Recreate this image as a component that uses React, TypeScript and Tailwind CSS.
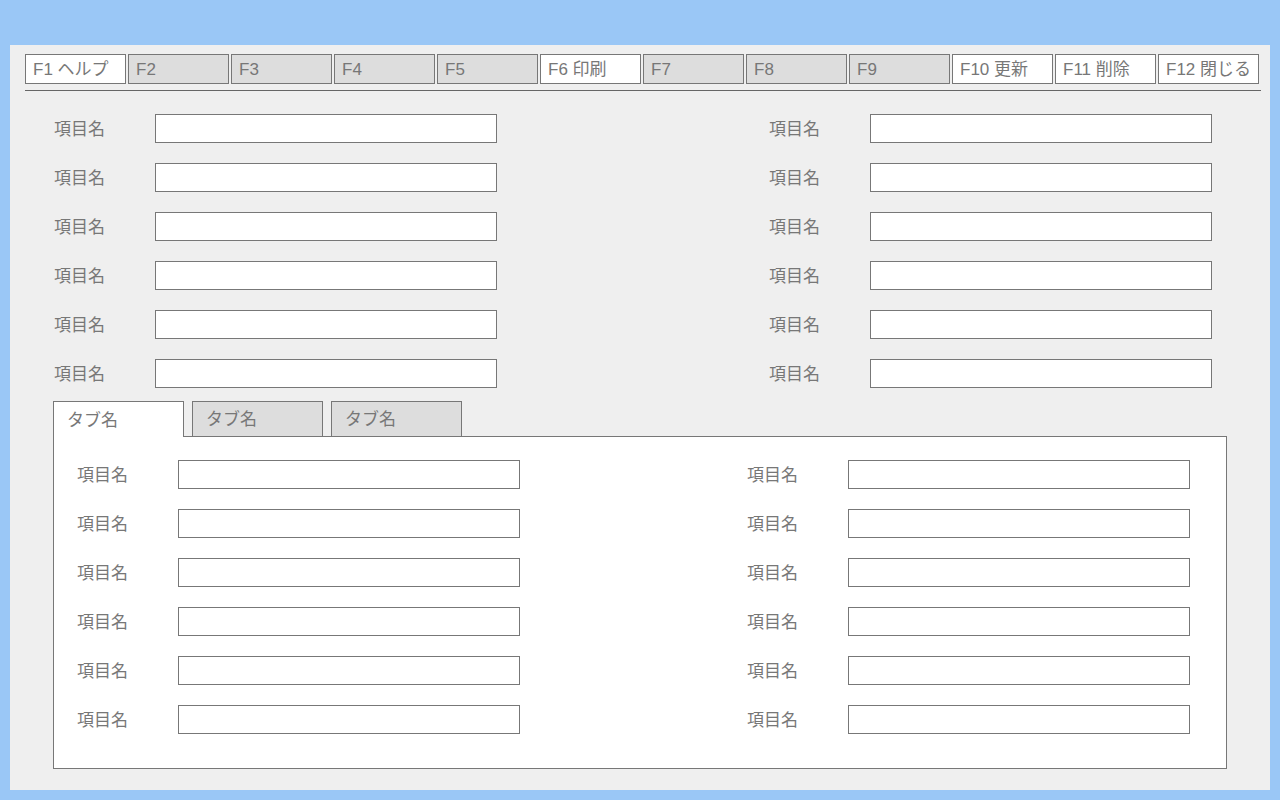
const fkeys = [
  { label: "F1 ヘルプ", on: true },
  { label: "F2", on: false },
  { label: "F3", on: false },
  { label: "F4", on: false },
  { label: "F5", on: false },
  { label: "F6 印刷", on: true },
  { label: "F7", on: false },
  { label: "F8", on: false },
  { label: "F9", on: false },
  { label: "F10 更新", on: true },
  { label: "F11 削除", on: true },
  { label: "F12 閉じる", on: true },
];

const rows = [0, 1, 2, 3, 4, 5];

const Field = () => (
  <div className="flex items-center">
    <span className="w-[101px] pt-px text-[17px] leading-none text-[#777]">項目名</span>
    <div className="h-[29px] w-[342px] border border-[#777] bg-white" />
  </div>
);

const FieldGrid = () => (
  <div className="flex flex-col gap-[20px]">
    {rows.map((r) => (
      <div key={r} className="flex justify-between">
        <Field />
        <Field />
      </div>
    ))}
  </div>
);

export default function App() {
  return (
    <div
      className="min-h-[800px] bg-[#9ac7f6] px-[10px] pb-[10px] pt-[45px] text-[#777]"
      style={{ fontFamily: '"Liberation Sans", "Noto Sans CJK JP", sans-serif' }}
    >
      <div className="h-[745px] bg-[#efefef] pl-[15px] pr-[9px] pt-[9px]">
        <div className="flex gap-[2px]">
          {fkeys.map((k) => (
            <button
              key={k.label}
              className={`h-[30px] w-[101px] shrink-0 overflow-hidden whitespace-nowrap border border-[#777] pl-[7px] pr-[2px] pt-px text-left text-[17px] leading-none text-[#777] ${
                k.on ? "bg-white" : "bg-[#dddddd]"
              }`}
            >
              {k.label}
            </button>
          ))}
        </div>
        <div className="mt-[6px] h-px w-[1236px] bg-[#666]" />

        <div className="mt-[23px] pl-[29px] pr-[49px]">
          <FieldGrid />
        </div>

        <div className="ml-[28px] mt-[13px] w-[1174px]">
          <div className="flex gap-[8px]">
            {["タブ名", "タブ名", "タブ名"].map((t, i) => (
              <div
                key={i}
                className={`relative flex h-[36px] w-[131px] items-center border border-[#777] px-[13px] pt-px text-[17px] leading-none ${
                  i === 0 ? "z-10 border-b-0 bg-white" : "bg-[#dddddd]"
                }`}
              >
                {t}
              </div>
            ))}
          </div>
          <div className="-mt-px h-[333px] border border-[#777] bg-white pl-[23px] pr-[36px] pt-[23px]">
            <FieldGrid />
          </div>
        </div>
      </div>
    </div>
  );
}
